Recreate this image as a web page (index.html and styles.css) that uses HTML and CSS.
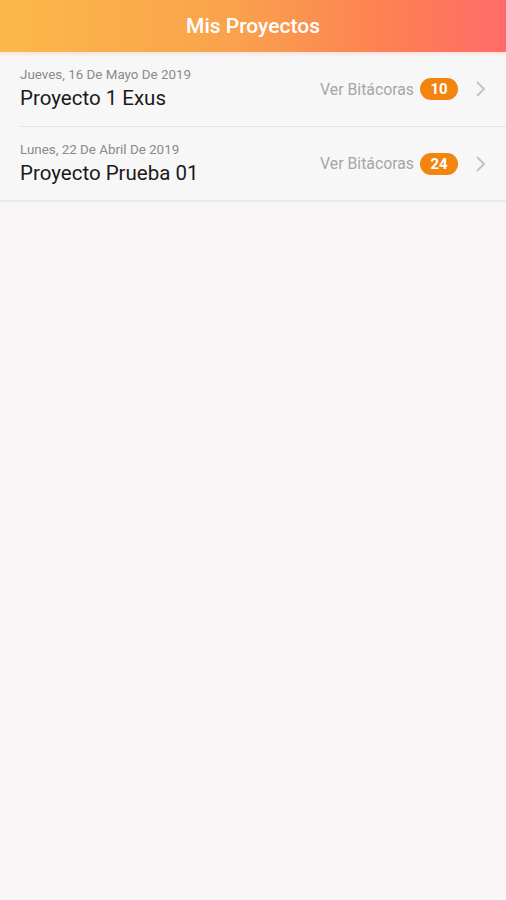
FILE: index.html
```html
<!DOCTYPE html>
<html>
<head>
<meta charset="utf-8">
<link rel="stylesheet" href="styles.css">
</head>
<body>
<header class="bar">Mis Proyectos</header>
<ul class="list">
  <li class="item">
    <div class="inner">
      <div class="text">
        <div class="date">Jueves, 16 De Mayo De 2019</div>
        <div class="title">Proyecto 1 Exus</div>
      </div>
      <span class="link">Ver Bitácoras</span>
      <span class="badge">10</span>
      <svg class="chev" width="12" height="18" viewBox="0 0 12 18"><path d="M3 2 L10 9 L3 16" fill="none" stroke="#c4c4c4" stroke-width="2"/></svg>
    </div>
  </li>
  <li class="item">
    <div class="inner">
      <div class="text">
        <div class="date">Lunes, 22 De Abril De 2019</div>
        <div class="title">Proyecto Prueba 01</div>
      </div>
      <span class="link">Ver Bitácoras</span>
      <span class="badge">24</span>
      <svg class="chev" width="12" height="18" viewBox="0 0 12 18"><path d="M3 2 L10 9 L3 16" fill="none" stroke="#c4c4c4" stroke-width="2"/></svg>
    </div>
  </li>
</ul>
</body>
</html>
```
FILE: styles.css
```css
html, body {
  margin: 0;
  padding: 0;
  background: #f8f6f6;
  font-family: Roboto, "Liberation Sans", sans-serif;
  height: 100%;
}
.bar {
  height: 52px;
  display: flex;
  align-items: center;
  justify-content: center;
  color: #fff;
  font-size: 21px;
  font-weight: 500;
  background: linear-gradient(90deg, #fcb84a 0%, #f9a34c 45%, #fe7d55 80%, #ff6b6a 100%);
  position: relative;
  z-index: 1;
  box-shadow: 0 2px 4px rgba(240, 120, 90, 0.18);
}
.list {
  list-style: none;
  margin: 0;
  padding: 0 0 0 20px;
  background: #f8f7f7;
  border-bottom: 1px solid #e8e6e6;
  box-shadow: 0 1px 2px rgba(0,0,0,0.05);
}
.item {
  height: 74px;
}
.item + .item .inner {
  border-top: 1px solid #e6e4e4;
}
.inner {
  height: 100%;
  box-sizing: border-box;
  display: flex;
  align-items: center;
  padding-right: 20px;
}
.text {
  flex: 1;
  display: flex;
  flex-direction: column;
  gap: 3px;
  margin-top: -1px;
}
.date {
  font-size: 13.4px;
  color: #8a8a8a;
  line-height: 16px;
}
.title {
  font-size: 20.5px;
  color: #1a1a1a;
  line-height: 24px;
}
.link {
  font-size: 15.8px;
  color: #a6a6a6;
  margin-right: 6px;
}
.badge {
  background: #f2840f;
  color: #fff;
  font-weight: 700;
  font-size: 15px;
  width: 38px;
  height: 22px;
  border-radius: 11px;
  display: flex;
  align-items: center;
  justify-content: center;
  margin-right: 16px;
}
.chev {
  display: block;
}
```
